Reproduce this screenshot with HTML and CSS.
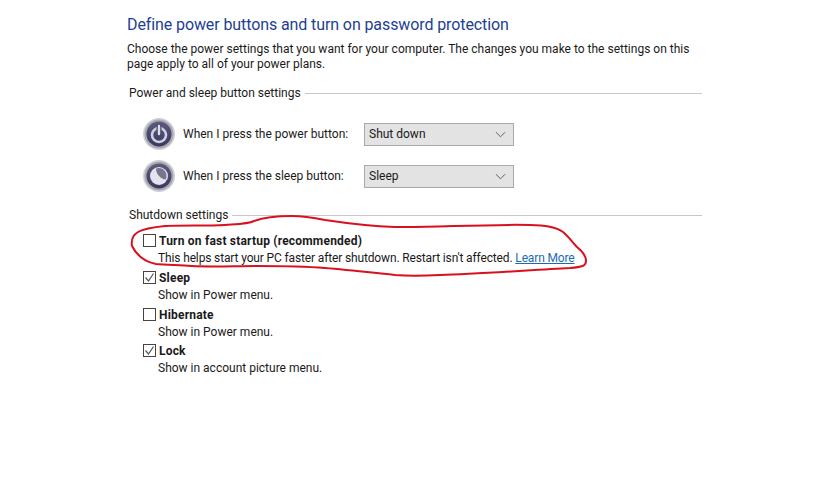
FILE: index.html
```html
<!DOCTYPE html>
<html lang="en">
<head>
  <meta charset="UTF-8">
  <meta name="viewport" content="width=device-width, initial-scale=1.0">
  <title>System Settings</title>
  <link rel="stylesheet" href="styles.css">
</head>
<body>
  <div class="page">
    <h1 class="page-title">Define power buttons and turn on password protection</h1>
    <p class="page-desc">Choose the power settings that you want for your computer. The changes you make to the settings on this<br>page apply to all of your power plans.</p>

    <!-- Power and sleep buttons -->
    <div class="section-head section-head-power">
      <span>Power and sleep button settings</span>
      <div class="section-line"></div>
    </div>

    <div class="button-row">
      <svg class="round-icon" viewBox="0 0 32 32">
        <use href="#orb"></use>
        <circle cx="16" cy="17" r="7" fill="none" stroke="#cfd1e2" stroke-width="2.6"/>
        <path d="M16 6.5v9" stroke="#4d4c72" stroke-width="5"/>
        <path d="M16 8v8" stroke="#dcdee8" stroke-width="2.4" stroke-linecap="round"/>
      </svg>
      <span class="button-label">When I press the power button:</span>
      <div class="select-box">
        <span>Shut down</span>
        <svg class="chevron" viewBox="0 0 12 7"><path d="M1 1l5 5 5-5" fill="none" stroke="#555" stroke-width="1"/></svg>
      </div>
    </div>

    <div class="button-row button-row-sleep">
      <svg class="round-icon" viewBox="0 0 32 32">
        <defs>
          <linearGradient id="orbFill" x1="0" y1="0" x2="0" y2="1">
            <stop offset="0" stop-color="#5c5a7e"/>
            <stop offset="1" stop-color="#3a3860"/>
          </linearGradient>
          <g id="orb">
            <circle cx="16" cy="16" r="16" fill="#d2d2d6"/>
            <circle cx="16" cy="16" r="14.5" fill="#a9a9b2"/>
            <circle cx="16" cy="16" r="12.5" fill="url(#orbFill)"/>
          </g>
        </defs>
        <use href="#orb"></use>
        <circle cx="16" cy="16" r="9" fill="#e2e3ec"/>
        <path d="M13 8.5c5-2 10.5 1.5 10.5 7.5 0 1.500-.4 2.500-1 3.500-4.500-.5-9.500-5-9.500-11z" fill="#77768e"/>
      </svg>
      <span class="button-label">When I press the sleep button:</span>
      <div class="select-box">
        <span>Sleep</span>
        <svg class="chevron" viewBox="0 0 12 7"><path d="M1 1l5 5 5-5" fill="none" stroke="#555" stroke-width="1"/></svg>
      </div>
    </div>

    <!-- Shutdown settings -->
    <div class="section-head section-head-shutdown">
      <span>Shutdown settings</span>
      <div class="section-line"></div>
    </div>

    <div class="option option-first">
      <div class="check-box"></div>
      <div>
        <div class="option-name">Turn on fast startup (recommended)</div>
        <div class="option-desc option-desc-long">This helps start your PC faster after shutdown. Restart isn't affected. <a class="learn-more" href="#">Learn More</a></div>
      </div>
    </div>
    <div class="option">
      <div class="check-box"><svg viewBox="0 0 13 13"><path d="M2.500 6.500l3 3.500 5-7.500" fill="none" stroke="#555" stroke-width="1.200"/></svg></div>
      <div>
        <div class="option-name">Sleep</div>
        <div class="option-desc">Show in Power menu.</div>
      </div>
    </div>
    <div class="option">
      <div class="check-box"></div>
      <div>
        <div class="option-name">Hibernate</div>
        <div class="option-desc">Show in Power menu.</div>
      </div>
    </div>
    <div class="option">
      <div class="check-box"><svg viewBox="0 0 13 13"><path d="M2.500 6.500l3 3.500 5-7.500" fill="none" stroke="#555" stroke-width="1.200"/></svg></div>
      <div>
        <div class="option-name">Lock</div>
        <div class="option-desc">Show in account picture menu.</div>
      </div>
    </div>
  </div>

  <!-- Red hand-drawn mark over the fast startup option -->
  <svg class="scribble" width="826" height="484" viewBox="0 0 826 484">
    <path d="M132 246C131 240 133 235 138 232C145 228 155 227 165 226C185 225 205 226 225 225C240 224 248 224 254 221C262 218 272 216 292 216C305 216 315 218 325 220C345 223 365 226 395 227C430 228 480 224 530 225C545 225 556 227 563 232C569 237 573 243 577 247C582 251 586 255 586 261C586 266 582 267 570 268C530 270 480 274 440 275C420 276 408 276 395 275C375 273 350 270 325 268C300 266 280 266 258 266C235 266 212 267 192 266C178 265 166 265 156 264C146 262 137 256 132 246Z" fill="none" stroke="#d9101e" stroke-width="2"/>
  </svg>
</body>
</html>
```

FILE: styles.css
```css
body {
  margin: 0;
  padding: 0;
  overflow: hidden;
  background: #fff;
  color: #1a1a1a;
  font-family: Roboto, "Noto Sans", Arial, sans-serif;
  font-size: 12px;
}

.page {
  width: 575px;
  padding: 15px 0 0 127px;
}

.page-title {
  margin: 0;
  color: #1d3f94;
  font-size: 16px;
  font-weight: 400;
  letter-spacing: -0.1px;
  line-height: 20px;
}

.page-desc {
  margin: 7px 0 0;
  line-height: 15px;
}

.section-head {
  display: flex;
  align-items: center;
  gap: 4px;
  padding-left: 2px;
  line-height: 16px;
}

.section-head-power {
  margin-top: 13px;
}

.section-head-shutdown {
  margin-top: 15px;
}

.section-line {
  flex: 1;
  height: 1px;
  background: #c8c8c8;
}

.button-row {
  display: flex;
  align-items: center;
  margin: 17px 0 0 16px;
  height: 32px;
}

.button-row-sleep {
  margin-top: 10px;
}

.round-icon {
  width: 32px;
  height: 32px;
  flex: none;
}

.button-label {
  width: 181px;
  margin-left: 8px;
}

.select-box {
  display: flex;
  align-items: center;
  justify-content: space-between;
  box-sizing: border-box;
  width: 150px;
  height: 23px;
  padding: 0 7px 0 4px;
  background: #e3e3e3;
  border: 1px solid #a9a9a9;
}

.chevron {
  width: 11px;
  height: 7px;
}

.option {
  display: flex;
  gap: 3px;
  margin-left: 16px;
  padding-top: 1px;
  height: 35.5px;
}

.option-first {
  margin-top: 9px;
  height: 36px;
}

.check-box {
  box-sizing: border-box;
  flex: none;
  width: 13px;
  height: 13px;
  margin-top: 1px;
  background: #fff;
  border: 1px solid #444;
}

.check-box svg {
  display: block;
  width: 13px;
  height: 13px;
  margin: -1px;
}

.option-name {
  font-weight: 700;
  letter-spacing: 0.2px;
  line-height: 16px;
}

.option-desc {
  margin-left: -1px;
  line-height: 18px;
}

.option-desc-long {
  letter-spacing: -0.14px;
}

.learn-more {
  color: #1c6bb0;
}

.scribble {
  position: absolute;
  top: 0;
  left: 0;
  pointer-events: none;
}
```
